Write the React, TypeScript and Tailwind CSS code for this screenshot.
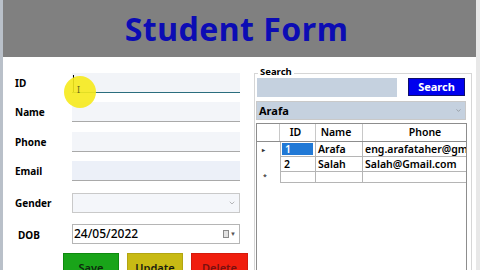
import { ChevronDown } from "lucide-react"

const fields = [
  { label: "ID", mt: "mt-[16px]", focused: true },
  { label: "Name", mt: "mt-[9px]" },
  { label: "Phone", mt: "mt-[10px]" },
  { label: "Email", mt: "mt-[9px]", tint: true },
]

const rows = [
  { id: "1", name: "Arafa", phone: "eng.arafataher@gmail.com", current: true },
  { id: "2", name: "Salah", phone: "Salah@Gmail.com" },
]

const TextField = ({ focused, tint }: { focused?: boolean; tint?: boolean }) => (
  <div
    className={`relative h-[20px] w-[168px] border-b ${
      focused ? "border-[#2b6e7e] bg-[#f2f4f8]" : "border-[#a9a9a9]"
    } ${tint ? "bg-[#ecf0f8]" : focused ? "" : "bg-[#f3f5f9]"}`}
  >
    {focused && <span className="absolute left-[1px] top-[2px] h-[17px] w-px bg-black" />}
  </div>
)

export default function App() {
  return (
    <div className="flex h-[270px] w-[480px] overflow-hidden bg-[#e4e6e9] font-['Noto_Sans',sans-serif] text-black">
      <div className="w-[3px] shrink-0 bg-[#b9c0c9]" />

      <div className="flex w-[473px] shrink-0 flex-col bg-white">
        <header className="flex h-[57px] shrink-0 items-center justify-center bg-[#808080] pr-[6px] pt-[1px]">
          <h1 className="text-[32px] font-bold leading-none tracking-[0.5px] text-[#0c0cb4]">Student Form</h1>
        </header>

        <div className="flex flex-1">
          {/* form */}
          <div className="relative flex w-[251px] shrink-0 flex-col">
            {fields.map((f) => (
              <div key={f.label} className={`flex h-[20px] items-center ${f.mt}`}>
                <span className="w-[69px] shrink-0 pl-[12px] text-[10px] font-bold">{f.label}</span>
                <TextField focused={f.focused} tint={f.tint} />
              </div>
            ))}

            <div className="mt-[12px] flex h-[20px] items-center">
              <span className="w-[69px] shrink-0 pl-[12px] text-[10px] font-bold">Gender</span>
              <div className="flex h-[20px] w-[168px] items-center justify-end border border-[#c9c9c9] bg-[#f4f6fa] pr-[3px]">
                <ChevronDown className="size-[8px] text-[#777]" strokeWidth={1.5} />
              </div>
            </div>

            <div className="mt-[11px] flex h-[20px] items-center">
              <span className="w-[69px] shrink-0 pl-[15px] pt-[2px] text-[10px] font-bold">DOB</span>
              <div className="flex h-[20px] w-[168px] items-center justify-between border border-[#b5b5b5] bg-white pl-[1px] pr-[3px]">
                <span className="text-[12px] font-medium leading-none">24/05/2022</span>
                <span className="flex items-center gap-[1px]">
                  <span className="h-[8px] w-[6px] border border-[#8a8a8a] bg-[#e2e2e2]" />
                  <span className="text-[6px] leading-none text-[#555]">▼</span>
                </span>
              </div>
            </div>

            <div className="mt-[9px] flex gap-[8px] pl-[60px]">
              <button className="h-[28px] w-[56px] border border-[#0e8a0e] bg-[#19a419] pt-[2px] text-[11px] font-semibold text-[#0d2a0d]">
                Save
              </button>
              <button className="h-[28px] w-[56px] border border-[#b2a512] bg-[#c8ba14] pt-[2px] text-[11px] font-semibold text-[#1a1a10]">
                Update
              </button>
              <button className="h-[28px] w-[57px] border border-[#d41a0c] bg-[#f01e0e] pt-[2px] text-[11px] font-semibold text-[#7a1010]">
                Delete
              </button>
            </div>

            {/* mouse highlight */}
            <div className="absolute left-[61px] top-[19px] size-[32px] rounded-full bg-[#f6ea1c]/90" />
            <span className="absolute left-[74px] top-[28px] text-[9px] leading-none text-[#6b6a20]">I</span>
          </div>

          {/* search group */}
          <div className="relative mt-[16px] flex w-[218px] shrink-0 flex-col border border-b-0 border-[#d6d6d6] pl-[2px] pt-[4px]">
            <span className="absolute -top-[7px] left-[3px] bg-white px-[2px] text-[9.5px] font-bold leading-none">Search</span>

            <div className="flex items-start">
              <div className="h-[19px] w-[140px] bg-[#c5d1df]" />
              <button className="ml-[11px] flex h-[18px] w-[57px] items-center justify-center border border-[#10106a] bg-[#0000ee] text-[11px] font-bold text-white">
                Search
              </button>
            </div>

            <div className="-ml-[1px] mt-[4px] flex h-[19px] w-[210px] items-center justify-between border border-[#c9c9c9] bg-[#c5d1df] pl-[2px] pr-[3px]">
              <span className="text-[11px] font-bold leading-none">Arafa</span>
              <ChevronDown className="size-[7px] text-[#666]" strokeWidth={1.5} />
            </div>

            <div className="-ml-[1px] mt-[3px] flex w-[211px] flex-1 flex-col overflow-hidden border border-b-0 border-[#8d8d8d] bg-white text-[10.5px]">
              <div className="flex h-[18px] shrink-0 border-b border-[#8d8d8d] font-semibold">
                <div className="w-[23px] shrink-0 border-r border-[#c8c8c8]" />
                <div className="flex w-[36px] shrink-0 items-center justify-center border-r border-[#c8c8c8] pr-[4px]">ID</div>
                <div className="flex w-[47px] shrink-0 items-center justify-center border-r border-[#c8c8c8] pr-[6px]">Name</div>
                <div className="flex w-[120px] shrink-0 items-center justify-center pl-[4px]">Phone</div>
              </div>
              {rows.map((r) => (
                <div key={r.id} className="flex h-[15px] shrink-0 font-semibold leading-none">
                  <div className="flex w-[23px] shrink-0 items-center pl-[5px] text-[6px] text-[#333]">
                    {r.current ? "▸" : ""}
                  </div>
                  <div className="flex w-[36px] shrink-0 border-b border-l border-r border-[#b5b5b5]">
                    <span
                      className={`flex flex-1 items-center pl-[3px] ${
                        r.current ? "my-[1px] ml-[1px] mr-[2px] bg-[#2179d6] pl-[2px] text-white" : ""
                      }`}
                    >
                      {r.id}
                    </span>
                  </div>
                  <div className="flex w-[47px] shrink-0 items-center border-b border-r border-[#b5b5b5] pl-[2px]">{r.name}</div>
                  <div className="flex w-[120px] shrink-0 items-center whitespace-nowrap border-b border-[#b5b5b5] pl-[2px]">
                    {r.phone}
                  </div>
                </div>
              ))}
              <div className="flex h-[11px] shrink-0">
                <div className="w-[23px] shrink-0 pl-[6px] text-[7px] leading-[9px]">*</div>
                <div className="w-[36px] shrink-0 border-b border-l border-r border-[#b5b5b5]" />
                <div className="w-[47px] shrink-0 border-b border-r border-[#b5b5b5]" />
                <div className="w-[120px] shrink-0 border-b border-[#b5b5b5]" />
              </div>
            </div>
          </div>
        </div>
      </div>

      <div className="flex-1 bg-[#e8e8e8]" />
    </div>
  )
}
